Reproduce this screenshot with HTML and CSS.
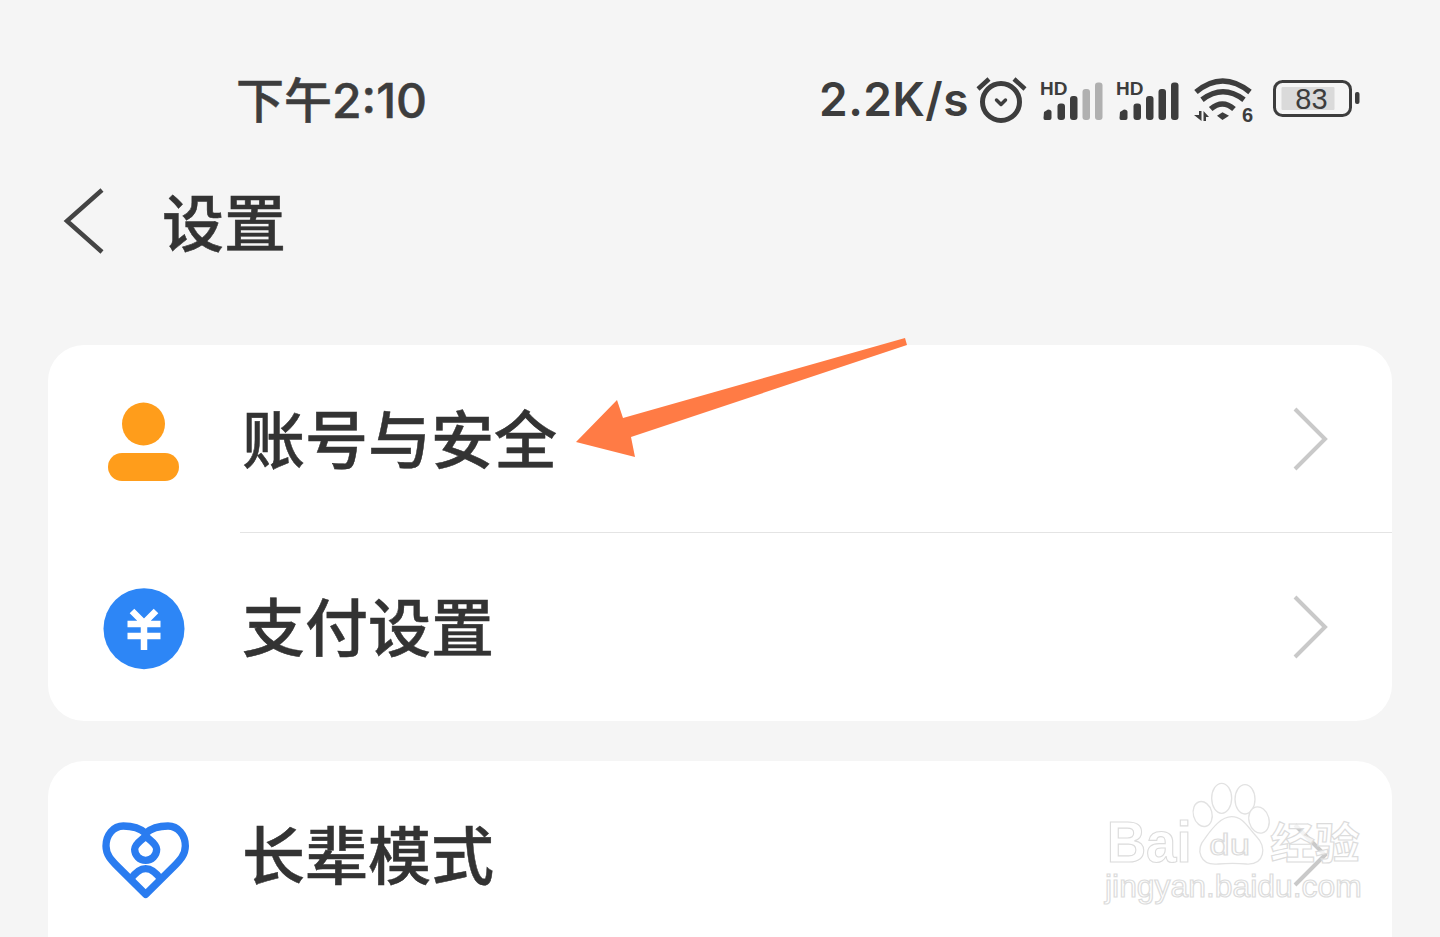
FILE: index.html
```html
<!DOCTYPE html>
<html>
<head>
    <title>设置</title>
    <link rel="stylesheet" href="styles.css">
</head>
<body>
    <div class="page">
        <div class="status-bar">
            <span class="time">下午2:10</span>
            <div class="status-right">
                <span class="speed">2.2K/s</span>
                <svg class="alarm" width="52" height="52" viewBox="0 0 52 52">
                    <circle cx="25" cy="29" r="18.5" fill="none" stroke="#3d3d3d" stroke-width="5"/>
                    <path d="M2 16 L13 6 M38 6 L49 16" fill="none" stroke="#3d3d3d" stroke-width="4.5"/>
                    <path d="M20.5 27 L25 31.5 L29.5 27" fill="none" stroke="#3d3d3d" stroke-width="3.5" stroke-linecap="round" stroke-linejoin="round"/>
                </svg>
                <svg class="signal" width="66" height="44" viewBox="0 0 66 44">
                    <text x="0" y="18" class="hd">HD</text>
                    <path d="M4 35 L8 32.5 Q11.500 32.500 11.500 35 V41 Q11.500 43 9.500 43 H5 Q3.500 43 3.500 41 Z" fill="#3d3d3d"/>
                    <rect x="17.500" y="26.500" width="7.500" height="16.500" rx="3" fill="#3d3d3d"/>
                    <rect x="30" y="19" width="7.500" height="24" rx="3" fill="#3d3d3d"/>
                    <rect x="42.500" y="12" width="7.500" height="31" rx="3" fill="#b0b0b0"/>
                    <rect x="55" y="5.500" width="7.500" height="37.500" rx="3" fill="#b0b0b0"/>
                </svg>
                <svg class="signal" width="66" height="44" viewBox="0 0 66 44">
                    <text x="0" y="18" class="hd">HD</text>
                    <path d="M4 35 L8 32.5 Q11.500 32.500 11.500 35 V41 Q11.500 43 9.500 43 H5 Q3.500 43 3.500 41 Z" fill="#3d3d3d"/>
                    <rect x="17.500" y="26.500" width="7.500" height="16.500" rx="3" fill="#3d3d3d"/>
                    <rect x="30" y="19" width="7.500" height="24" rx="3" fill="#3d3d3d"/>
                    <rect x="42.500" y="12" width="7.500" height="31" rx="3" fill="#3d3d3d"/>
                    <rect x="55" y="5.500" width="7.500" height="37.500" rx="3" fill="#3d3d3d"/>
                </svg>
                <svg class="wifi" width="62" height="48" viewBox="0 0 62 48">
                    <path d="M2 17 Q28.500 -5 56 17" fill="none" stroke="#3d3d3d" stroke-width="5.500"/>
                    <path d="M8 24.700 Q29 8.700 50 24.700" fill="none" stroke="#3d3d3d" stroke-width="5.500"/>
                    <path d="M16.700 34 Q28.500 24 40 34" fill="none" stroke="#3d3d3d" stroke-width="5.500"/>
                    <path d="M23 40.700 L28.500 37.300 L35 40.700 L28.500 45 Z" fill="#3d3d3d"/>
                    <path d="M0 40 H5 V36 H7.500 V46 Z M9.500 36 L15 42 H12 V46 H9.500 Z" fill="#3d3d3d"/>
                    <text x="48" y="47" class="wifi-six">6</text>
                </svg>
                <svg class="battery" width="90" height="40" viewBox="0 0 90 40">
                    <rect x="2.500" y="2.500" width="76" height="34" rx="8" fill="none" stroke="#3d3d3d" stroke-width="3"/>
                    <rect x="9.500" y="8" width="53" height="23" rx="1" fill="#dadada"/>
                    <rect x="83" y="13" width="4.500" height="12" rx="2" fill="#3d3d3d"/>
                    <text x="39.500" y="30" class="battery-text">83</text>
                </svg>
            </div>
        </div>

        <div class="title-bar">
            <svg class="back" width="48" height="72" viewBox="0 0 48 72">
                <path d="M41 4 L6 35 L41 66" fill="none" stroke="#444" stroke-width="4.500"/>
            </svg>
            <h1>设置</h1>
        </div>

        <div class="card card-first">
            <div class="row">
                <svg class="row-icon" width="96" height="96" viewBox="0 0 96 96">
                    <circle cx="47.500" cy="33" r="21.500" fill="#ff9d1b"/>
                    <rect x="12" y="62" width="71" height="28" rx="14" fill="#ff9d1b"/>
                </svg>
                <span class="row-label">账号与安全</span>
                <svg class="chevron" width="40" height="70" viewBox="0 0 40 70"><path d="M5 5 L35 35 L5 65" fill="none" stroke="#c9c9c9" stroke-width="4"/></svg>
            </div>
            <div class="divider"></div>
            <div class="row">
                <svg class="row-icon" width="96" height="96" viewBox="0 0 96 96">
                    <circle cx="48" cy="49.700" r="40.500" fill="#2d86f6"/>
                    <path d="M36 32 L48 44 L60 32 M31.500 45 H64.500 M31.500 57 H64.500 M48 44 V71" fill="none" stroke="#fff" stroke-width="6.500"/>
                </svg>
                <span class="row-label">支付设置</span>
                <svg class="chevron" width="40" height="70" viewBox="0 0 40 70"><path d="M5 5 L35 35 L5 65" fill="none" stroke="#c9c9c9" stroke-width="4"/></svg>
            </div>
        </div>

        <div class="card card-last">
            <div class="row">
                <svg class="row-icon" width="96" height="96" viewBox="48 21 288 288">
                    <path d="M197 100 C175 80 150 78 130 78 C100 78 78 105 78 138 C78 165 95 182 110 197 L197 283 L284 197 C299 182 316 165 316 138 C316 105 294 78 264 78 C244 78 219 80 197 100 Z" fill="none" stroke="#2a7cf0" stroke-width="22" stroke-linejoin="round"/>
                    <path d="M197 108 C205 118 230 130 230 148 A33 33 0 0 1 164 148 C164 130 189 118 197 108 Z" fill="none" stroke="#2a7cf0" stroke-width="22"/>
                    <path d="M150 240 Q197 172 244 240" fill="none" stroke="#2a7cf0" stroke-width="22"/>
                </svg>
                <span class="row-label">长辈模式</span>
                <svg class="chevron" width="40" height="70" viewBox="0 0 40 70"><path d="M5 5 L35 35 L5 65" fill="none" stroke="#c9c9c9" stroke-width="4"/></svg>
            </div>
        </div>

        <!-- annotation arrow drawn over the screenshot -->
        <svg class="arrow" width="340" height="130" viewBox="0 0 340 130">
            <path d="M1 105 L42 63 L48 81 L330 1 L332 8 L56 100 L60 120 Z" fill="#ff7b45"/>
        </svg>

        <!-- watermark -->
        <svg class="watermark" width="290" height="150" viewBox="0 0 870 450">
            <g class="wm-paw">
                <ellipse cx="338" cy="132" rx="28" ry="38" transform="rotate(-15 338 132)"/>
                <ellipse cx="395" cy="85" rx="30" ry="45"/>
                <ellipse cx="465" cy="88" rx="30" ry="44"/>
                <ellipse cx="507" cy="150" rx="30" ry="40" transform="rotate(-15 507 150)"/>
                <path d="M345 205 C370 170 395 140 425 140 C460 140 475 175 500 200 C530 230 525 285 470 282 C445 280 410 280 385 282 C330 288 315 240 345 205 Z"/>
            </g>
            <text x="50" y="275" class="wm-bai" textLength="255" lengthAdjust="spacingAndGlyphs">Bai</text>
            <text x="358" y="256" class="wm-du" textLength="122" lengthAdjust="spacingAndGlyphs">du</text>
            <text x="541" y="267" class="wm-cn" textLength="268" lengthAdjust="spacingAndGlyphs">经验</text>
            <text x="45" y="380" class="wm-url" textLength="770" lengthAdjust="spacingAndGlyphs">jingyan.baidu.com</text>
        </svg>
    </div>
</body>
</html>
```

FILE: styles.css
```css
* {
    box-sizing: border-box;
}
html, body {
    margin: 0;
    padding: 0;
}
body {
    background-color: #f5f5f5;
    font-family: "Noto Sans CJK SC", "Noto Sans", sans-serif;
    color: #333;
}
.page {
    position: relative;
    width: 1440px;
    height: 937px;
    overflow: hidden;
}
.status-bar {
    height: 60px;
    margin-top: 69px;
    padding: 0 78px 0 236px;
    display: flex;
    justify-content: space-between;
    align-items: center;
    color: #3d3d3d;
}
.time {
    margin-top: 4px;
    font-family: Inter, "Noto Sans CJK SC", sans-serif;
    font-size: 48px;
    font-weight: 500;
    line-height: 60px;
    -webkit-text-stroke: 0.5px #3d3d3d;
}
.status-right {
    display: flex;
    align-items: center;
}
.speed {
    font-family: Inter, sans-serif;
    font-size: 46px;
    font-weight: 600;
    letter-spacing: 0.5px;
    line-height: 60px;
    margin-right: 7px;
}
.alarm {
    margin-right: 2px;
}
.signal {
    margin: 0 0 0 10px;
}
.wifi {
    margin-left: 12px;
    overflow: visible;
}
.battery {
    margin-left: 16px;
}
.hd {
    font-family: "Liberation Sans", sans-serif;
    font-size: 19px;
    font-weight: 700;
    fill: #3d3d3d;
}
.wifi-six {
    font-family: "Liberation Sans", sans-serif;
    font-size: 20px;
    font-weight: 700;
    fill: #3d3d3d;
}
.battery-text {
    font-family: "Liberation Sans", sans-serif;
    font-size: 29px;
    text-anchor: middle;
    fill: #3d3d3d;
}
.title-bar {
    height: 100px;
    margin-top: 43px;
    padding-left: 61px;
    display: flex;
    align-items: center;
}
.title-bar h1 {
    margin: 0 0 0 53px;
    padding-bottom: 4px;
    font-size: 62px;
    font-weight: 500;
    line-height: 96px;
    color: #333;
    -webkit-text-stroke: 0.5px #333;
}
.card {
    margin: 0 48px 40px 48px;
    background-color: #fff;
    border-radius: 36px;
}
.card-first {
    margin-top: 73px;
}
.card-last {
    height: 300px;
}
.row {
    height: 187px;
    padding-left: 48px;
    padding-right: 62px;
    display: flex;
    align-items: center;
}
.row-label {
    flex: 1;
    margin-left: 50px;
    margin-bottom: 6px;
    font-size: 63px;
    font-weight: 500;
    line-height: 80px;
    color: #333;
    -webkit-text-stroke: 0.5px #333;
}
.divider {
    height: 1px;
    margin-left: 192px;
    background-color: #e4e4e4;
}
.card-first .row:last-child {
    height: 188px;
}
.arrow {
    position: absolute;
    left: 575px;
    top: 337px;
}
.watermark {
    position: absolute;
    left: 1090px;
    top: 770px;
}
.wm-paw ellipse,
.wm-paw path {
    fill: rgba(255, 255, 255, 0.7);
    stroke: #e2e2e2;
    stroke-width: 4;
}
.wm-bai,
.wm-du,
.wm-cn,
.wm-url {
    font-family: "Liberation Sans", sans-serif;
    fill: rgba(255, 255, 255, 0.8);
    stroke: #dcdcdc;
    stroke-width: 3.5;
}
.wm-bai {
    font-size: 172px;
    font-weight: 700;
}
.wm-du {
    font-size: 86px;
}
.wm-cn {
    font-size: 130px;
    font-family: "Noto Sans CJK SC", sans-serif;
    font-weight: 700;
}
.wm-url {
    font-size: 92px;
}
```
